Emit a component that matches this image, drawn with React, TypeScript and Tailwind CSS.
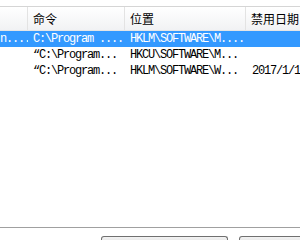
const COLS = ['w-[28px]', 'w-[97px]', 'w-[121px]', 'flex-1']

const ROWS = [
  { cells: ['n....', 'C:\\Program ....', 'HKLM\\SOFTWARE\\M....', ''], selected: true },
  { cells: ['', '“C:\\Program...', 'HKCU\\SOFTWARE\\M...', ''], selected: false },
  { cells: ['', '“C:\\Program...', 'HKLM\\SOFTWARE\\W...', '2017/1/1'], selected: false },
]

const HEADERS = ['', '命令', '位置', '禁用日期']

export default function App() {
  return (
    <div className="w-[300px] h-[240px] overflow-hidden bg-white flex flex-col text-black" style={{ fontFamily: '"Liberation Mono", "Noto Sans CJK SC", monospace' }}>
      {/* strip above the list header */}
      <div className="h-[7px] shrink-0 bg-white border-b border-[#d5d5d5]" />

      {/* Column header */}
      <div className="h-[24px] shrink-0 flex bg-gradient-to-b from-white to-[#f1f2f4] border-b border-[#e5e5e5]">
        {HEADERS.map((h, i) => (
          <div
            key={i}
            className={`${COLS[i]} shrink-0 h-full flex items-center pl-[5px] pt-px whitespace-nowrap overflow-hidden text-[12px] ${i < 3 ? 'border-r border-[#e3e3e3]' : ''}`}
            style={{ fontFamily: '"Noto Sans CJK SC", sans-serif' }}
          >
            {h}
          </div>
        ))}
      </div>

      {/* Rows */}
      <div className="flex flex-col">
        {ROWS.map((r, ri) => (
          <div key={ri} className={`h-[16px] flex items-center ${r.selected ? 'bg-[#3399ff] text-white' : ''}`}>
            {r.cells.map((c, ci) => (
              <div
                key={ci}
                className={`${COLS[ci]} shrink-0 whitespace-nowrap overflow-hidden text-[12px] tracking-[-1.2px] leading-[16px] ${ci === 0 ? 'pl-0' : ci === 3 ? 'pl-[6px]' : 'pl-[5px]'}`}
              >
                {c}
              </div>
            ))}
          </div>
        ))}
      </div>

      <div className="flex-1" />

      {/* bottom bar */}
      <div className="h-[13px] shrink-0 border-t border-[#a0a0a0] flex items-end gap-[11px] pl-[101px]">
        <button className="w-[127px] h-[4px] shrink-0 border border-b-0 border-[#707070] rounded-t-[3px] bg-gradient-to-b from-[#f2f2f2] to-[#ebebeb] text-[12px] leading-[20px] overflow-hidden flex justify-center" style={{ fontFamily: '"Noto Sans CJK SC", sans-serif' }}>
          <span className="pt-[1px]">全部启用(E)</span>
        </button>
        <button className="w-[127px] h-[4px] shrink-0 border border-b-0 border-[#707070] rounded-t-[3px] bg-gradient-to-b from-[#f2f2f2] to-[#ebebeb] text-[12px] leading-[20px] overflow-hidden flex justify-center" style={{ fontFamily: '"Noto Sans CJK SC", sans-serif' }}>
          <span className="pt-[1px]">全部禁用(D)</span>
        </button>
      </div>
    </div>
  )
}
